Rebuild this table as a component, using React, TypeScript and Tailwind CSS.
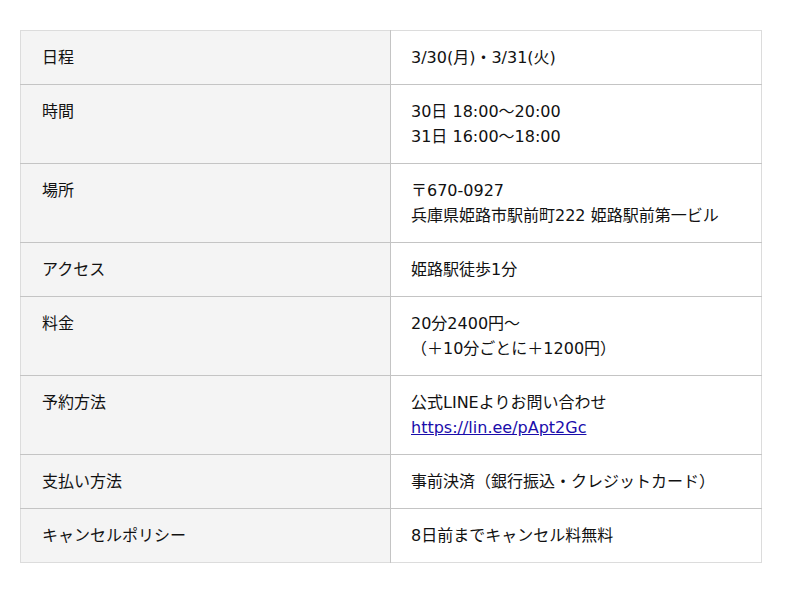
const rows: { label: string; value: React.ReactNode }[] = [
  { label: "日程", value: "3/30(月)・3/31(火)" },
  {
    label: "時間",
    value: (
      <>
        30日 18:00～20:00
        <br />
        31日 16:00～18:00
      </>
    ),
  },
  {
    label: "場所",
    value: (
      <>
        〒670-0927
        <br />
        兵庫県姫路市駅前町222 姫路駅前第一ビル
      </>
    ),
  },
  { label: "アクセス", value: "姫路駅徒歩1分" },
  {
    label: "料金",
    value: (
      <>
        20分2400円～
        <br />
        （＋10分ごとに＋1200円）
      </>
    ),
  },
  {
    label: "予約方法",
    value: (
      <>
        公式LINEよりお問い合わせ
        <br />
        <a href="#" className="text-[#1a0dab] underline">
          https://lin.ee/pApt2Gc
        </a>
      </>
    ),
  },
  { label: "支払い方法", value: "事前決済（銀行振込・クレジットカード）" },
  { label: "キャンセルポリシー", value: "8日前までキャンセル料無料" },
];

export default function App() {
  return (
    <div
      className="bg-white min-h-[593px] pt-[30px] px-[20px] text-[16px] leading-[25px] text-[#111]"
      style={{ fontFamily: '"DejaVu Sans", "Noto Sans CJK JP", sans-serif' }}
    >
      <table className="w-[742px] border border-[#dcdcdc] border-collapse table-fixed">
        <tbody>
          {rows.map((r) => (
            <tr key={r.label} className="border-b border-[#c4c4c4] last:border-b-[#dcdcdc]">
              <th className="w-[370px] bg-[#f4f4f4] border-r border-[#c4c4c4] px-[21px] pt-[14px] pb-[14px] text-left font-normal align-top">
                {r.label}
              </th>
              <td className="px-[20px] pt-[14px] pb-[14px] align-top">{r.value}</td>
            </tr>
          ))}
        </tbody>
      </table>
    </div>
  );
}
